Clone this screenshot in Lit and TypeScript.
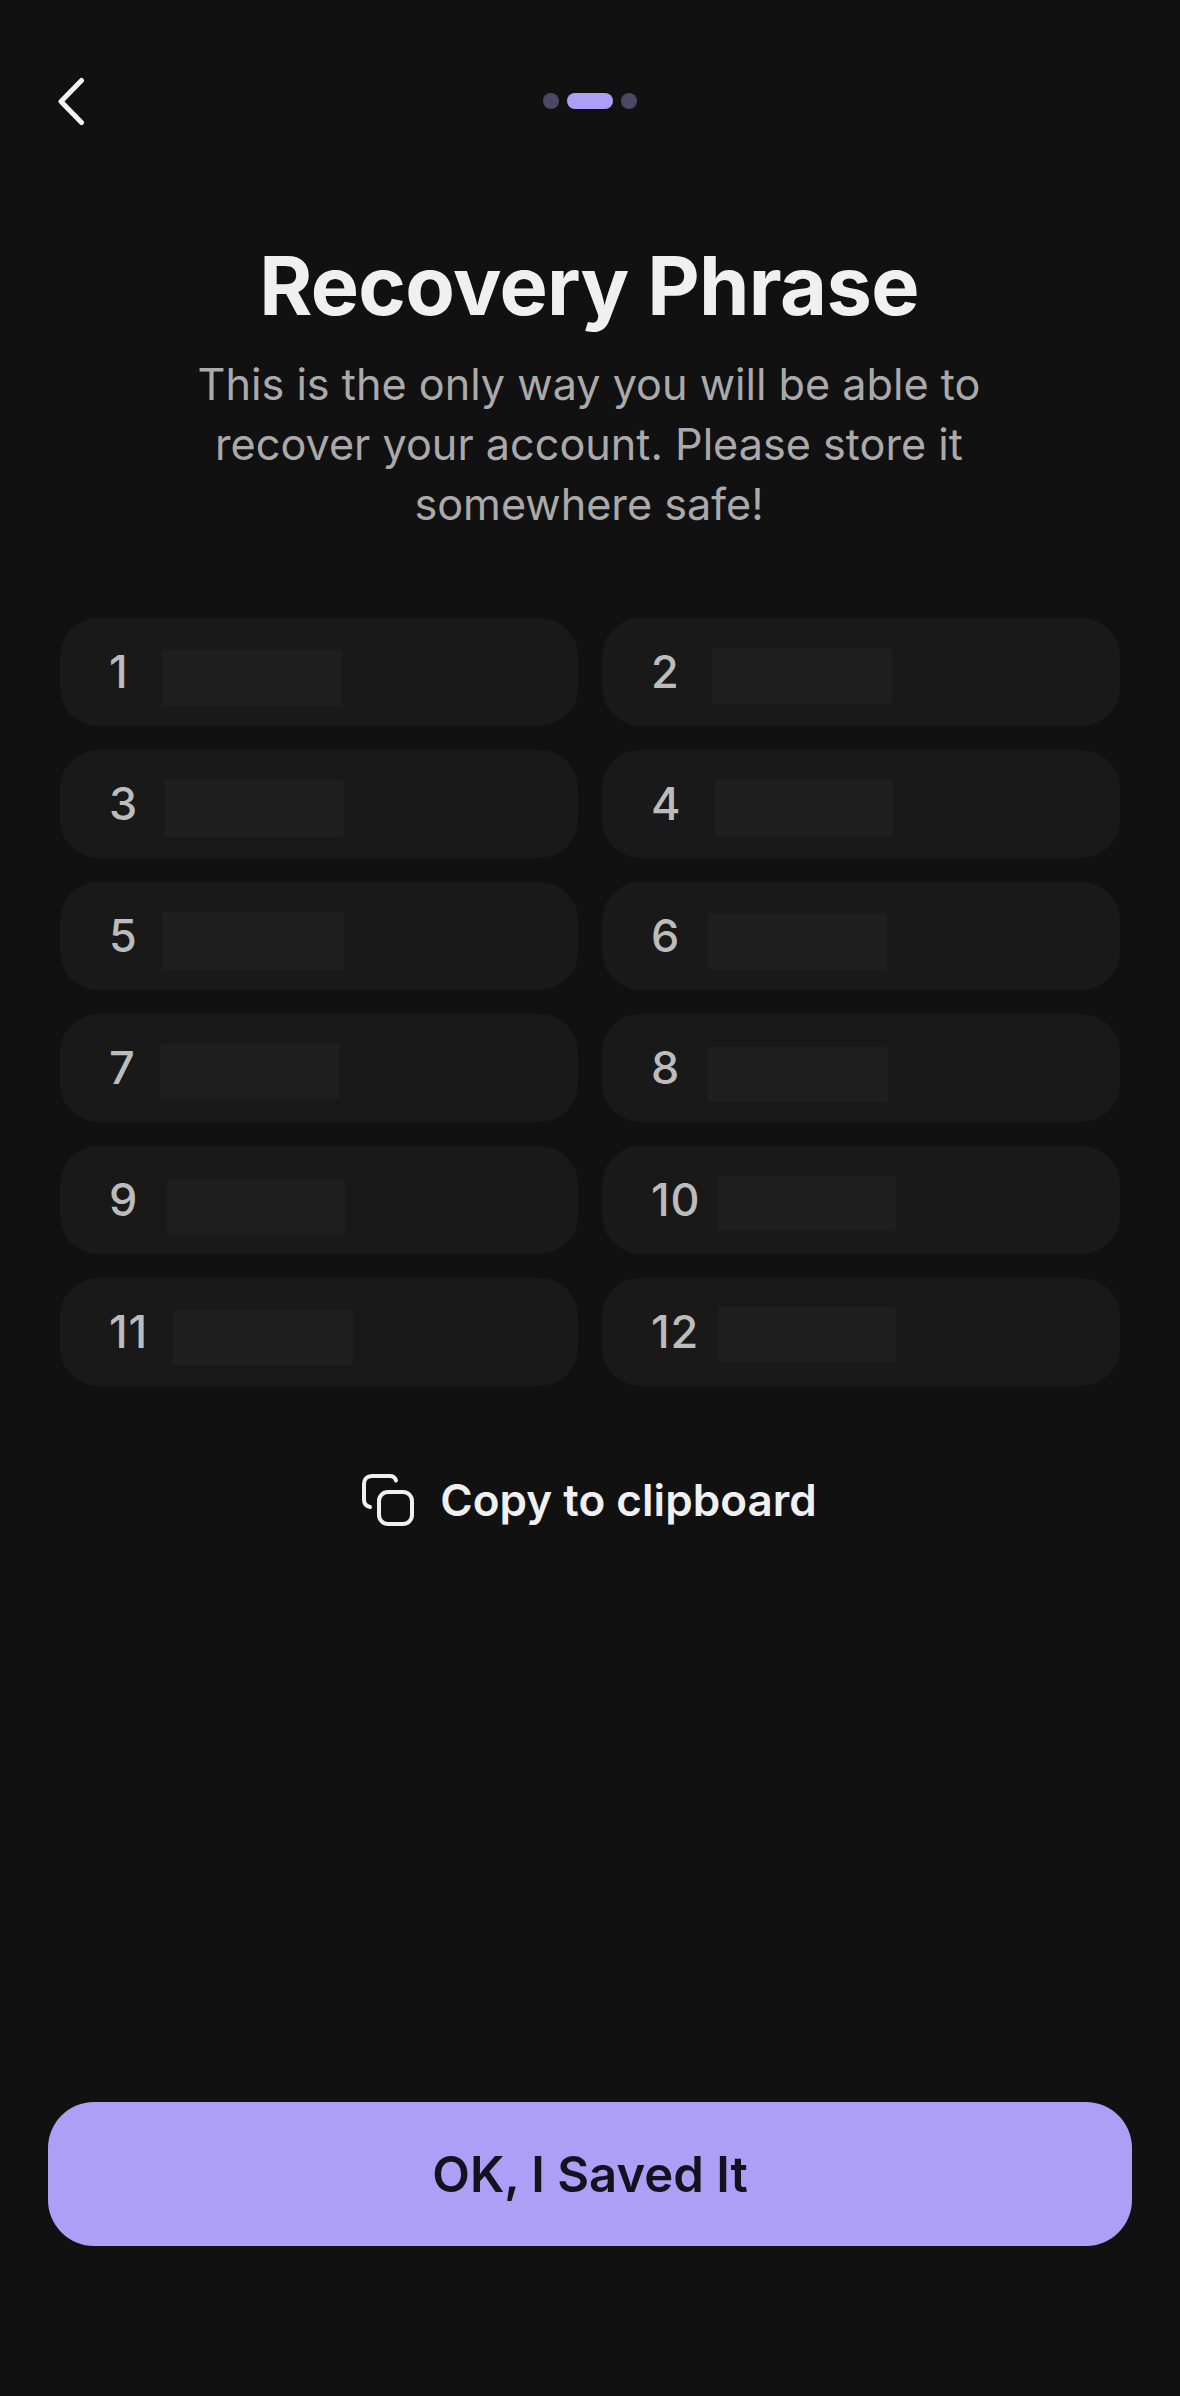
import { LitElement, html, css } from "lit";
import { customElement } from "lit/decorators.js";

// redacted word blocks: x is from the card's left edge, y from its top
const WORDS = [
  { n: 1, x: 102, y: 31, w: 180, h: 57 },
  { n: 2, x: 110, y: 30, w: 180, h: 56 },
  { n: 3, x: 105, y: 30, w: 179, h: 57 },
  { n: 4, x: 112, y: 30, w: 180, h: 56 },
  { n: 5, x: 102, y: 30, w: 182, h: 58 },
  { n: 6, x: 106, y: 31, w: 179, h: 57 },
  { n: 7, x: 100, y: 30, w: 179, h: 55 },
  { n: 8, x: 106, y: 33, w: 180, h: 55 },
  { n: 9, x: 107, y: 34, w: 178, h: 55 },
  { n: 10, x: 116, y: 30, w: 178, h: 55 },
  { n: 11, x: 113, y: 32, w: 180, h: 55 },
  { n: 12, x: 116, y: 29, w: 178, h: 55 },
];

@customElement("app-root")
export class AppRoot extends LitElement {
  static styles = css`
    :host {
      display: block;
      width: 1180px;
      height: 2396px;
      background: #111112;
      font-family: Inter, "Liberation Sans", sans-serif;
    }
    .page {
      display: flex;
      flex-direction: column;
      height: 100%;
      box-sizing: border-box;
    }
    .header {
      display: grid;
      grid-template-columns: 1fr auto 1fr;
      align-items: center;
      height: 50px;
      margin-top: 76px;
      padding-left: 55px;
    }
    .back {
      display: block;
      width: 32px;
      height: 50px;
    }
    .steps {
      display: flex;
      gap: 8px;
      margin-left: -55px;
    }
    .step {
      width: 16px;
      height: 16px;
      border-radius: 8px;
      background: #4c4864;
    }
    .step--active {
      width: 46px;
      background: #ad9ff6;
    }
    h1 {
      margin: 111px 0 0;
      padding-right: 2px;
      font-size: 81px;
      line-height: 98px;
      font-weight: 700;
      letter-spacing: -0.65px;
      color: #f0f0f0;
      text-align: center;
    }
    .lead {
      margin: 19px 0 0;
      padding-right: 2px;
      font-size: 43.2px;
      line-height: 60px;
      font-weight: 400;
      color: #aaaaaa;
      text-align: center;
    }
    .grid {
      display: grid;
      grid-template-columns: 518px 518px;
      gap: 24px;
      justify-content: center;
      margin-top: 84px;
    }
    .word {
      display: flex;
      align-items: flex-start;
      height: 108px;
      box-sizing: border-box;
      padding-left: 49px;
      border-radius: 38px;
      background: #19191a;
      position: relative;
    }
    .word__num {
      font-size: 45px;
      line-height: 108px;
      font-weight: 500;
      letter-spacing: 0.9px;
      color: #bcbcbc;
    }
    .word__blot {
      position: absolute;
      background: #1f1f20;
      filter: blur(1px);
    }
    .copy {
      display: flex;
      justify-content: center;
      align-items: center;
      gap: 25px;
      margin-top: 84px;
      padding-right: 2px;
      font-size: 44px;
      line-height: 60px;
      font-weight: 600;
      letter-spacing: 0.05px;
      color: #f0f0f0;
    }
    .copy svg {
      display: block;
      width: 54px;
      height: 54px;
    }
    .cta {
      display: flex;
      align-items: center;
      justify-content: center;
      height: 144px;
      margin: auto 48px 150px;
      border-radius: 46px;
      background: #ad9ff6;
      font-size: 49px;
      font-weight: 600;
      color: #15121f;
    }
  `;

  render() {
    return html`
      <div class="page">
        <div class="header">
          <svg class="back" viewBox="0 0 32 50" fill="none" stroke="#f4f4f4" stroke-width="5" stroke-linecap="round" stroke-linejoin="round">
            <path d="M26.5 4.5 L6 25.5 L26.5 46.5" />
          </svg>
          <div class="steps">
            <div class="step"></div>
            <div class="step step--active"></div>
            <div class="step"></div>
          </div>
          <div></div>
        </div>
        <h1>Recovery Phrase</h1>
        <p class="lead">
          This is the only way you will be able to<br />
          recover your account. Please store it<br />
          somewhere safe!
        </p>
        <div class="grid">
          ${WORDS.map(
            (word) => html`
              <div class="word">
                <span class="word__num">${word.n}</span>
                <span
                  class="word__blot"
                  style="left:${word.x}px;top:${word.y}px;width:${word.w}px;height:${word.h}px"
                ></span>
              </div>
            `
          )}
        </div>
        <div class="copy">
          <svg viewBox="0 0 54 54" fill="none" stroke="#f0f0f0" stroke-width="4" stroke-linecap="round">
            <path d="M35 7.5 C34 4.5 32 3 29 3 H11 C6 3 3 6 3 11 V27 C3 31 5 33 9 34" />
            <rect x="18" y="19" width="33" height="32" rx="9" />
          </svg>
          <span>Copy to clipboard</span>
        </div>
        <div class="cta">OK, I Saved It</div>
      </div>
    `;
  }
}
